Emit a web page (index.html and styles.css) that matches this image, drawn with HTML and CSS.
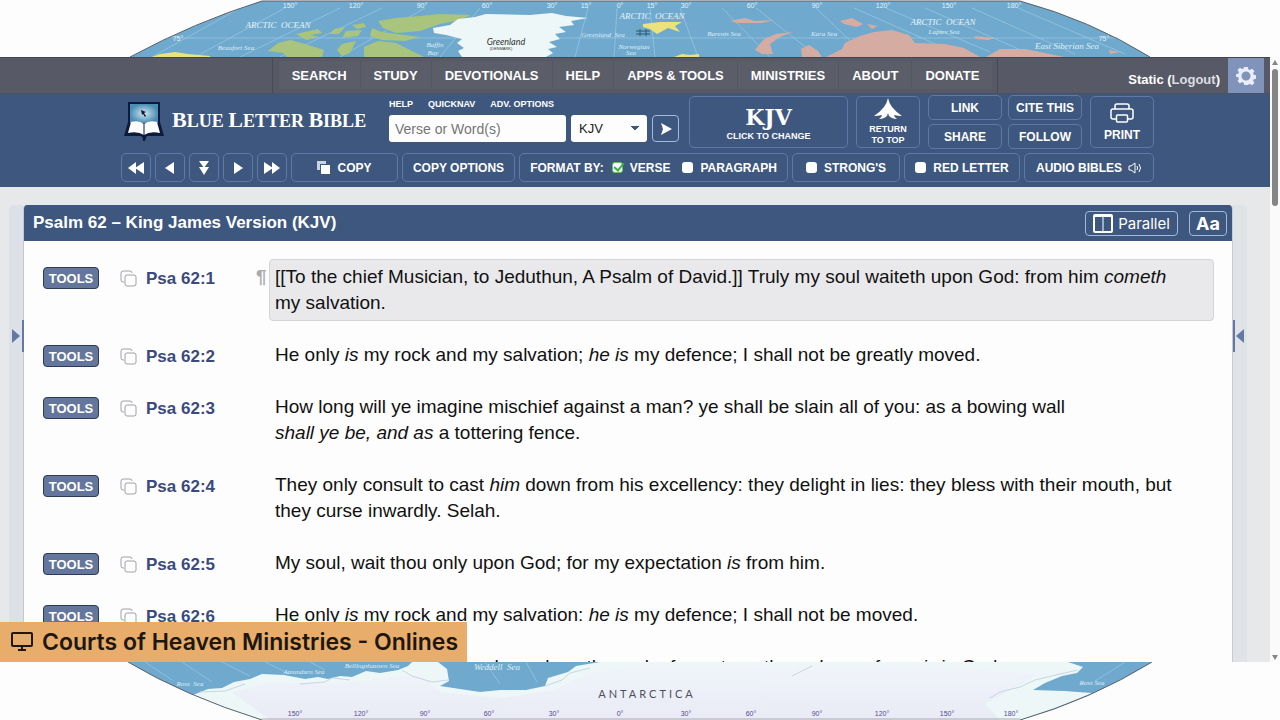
FILE: index.html
```html
<!DOCTYPE html>
<html lang="en">
<head>
    <meta charset="utf-8">
    <title>Psalm 62 - Blue Letter Bible</title>
    <link rel="stylesheet" href="styles.css">
</head>
<body>

    <svg class="map" viewBox="0 0 1280 57" preserveAspectRatio="none">
        <path class="sea" d="M130 57 Q195 22 262 1 H1020 Q1090 20 1150 57 Z"/>
        <g class="grid-lines">
            <path d="M172 38 H1118 M152 57 L240 8 M195 57 L285 8 M240 57 L340 8 M280 57 L382 8 M340 57 L425 8 M440 57 L480 8 M575 57 L588 8 M614 57 L617 8 M655 57 L650 8 M698 57 L680 8 M770 57 L722 8 M818 57 L756 8 M862 52 L816 8 M940 46 L854 8 M990 52 L886 8 M1030 54 L925 8 M1075 54 L972 8 M1125 54 L1018 8"/>
        </g>
        <path class="land-yellow" d="M152 57 L160 54 L175 52 L188 54 L210 56 V57 Z M643 24 L660 22 L682 22 L675 26 L680 32 L668 28 L657 34 L650 29 L643 27 Z M674 57 L682 54 L690 55 L699 54 V57 Z"/>
        <path class="land-green" d="M268 51 L278 43 L290 40 L305 44 L324 50 L322 57 H287 L283 53 Z M296 34 L318 29 L322 33 L310 35 L319 37 L306 40 Z M334 29 L345 27 L339 34 L330 34 Z M346 31 L362 30 L358 36 L342 38 Z M352 25 L364 23 L366 27 L357 29 Z M378 21 L396 18 L420 16 L440 14 L471 15 L460 20 L440 24 L420 31 L396 33 L383 28 Z M372 28 L382 32 L397 34 L420 37 L405 41 L382 40 L370 36 Z M342 44 L356 41 L350 53 L342 56 L337 50 Z M364 47 L378 41 L396 43 L410 50 L424 57 H364 Z"/>
        <path class="ice" d="M433 28 L450 25 L458 19 L475 17 L486 14 L530 15 L552 13 L566 16 L588 18 L571 21 L574 25 L559 27 L566 32 L555 34 L560 39 L549 42 L557 47 L548 49 L553 53 L546 57 H462 L458 51 L464 48 L457 43 L462 39 L446 35 L434 33 Z"/>
        <path class="land-pink" d="M730 21 L745 18 L755 21 L774 20 L762 23 L738 23 Z M755 50 L764 39 L776 34 L793 32 L780 37 L770 44 L773 54 L762 54 Z M801 49 L809 45 L818 51 L822 57 H802 Z M826 57 L842 49 L845 43 L860 36 L874 32 L892 30 L909 35 L915 43 L945 44 L964 48 L980 57 Z M840 21 L852 18 L863 24 L857 27 L844 24 Z M867 24 L878 26 L872 29 Z M974 36 L995 38 L988 40 L976 39 Z M986 57 L1000 49 L1025 49 L1045 53 L1064 57 Z M1109 50 L1120 52 L1110 54 Z"/>
        <path class="mark" d="M636 31 H650 M636 34 H650 M640 29 V36 M646 29 V36"/>
        <path class="map-edge" d="M130 57 Q195 22 262 1 H1020 Q1090 20 1150 57"/>
        <g class="degrees">
            <text x="290" y="8">150°</text><text x="356" y="8">120°</text><text x="422" y="8">90°</text>
            <text x="487" y="8">60°</text><text x="552" y="8">30°</text><text x="586" y="8">15°</text>
            <text x="620" y="8">0°</text><text x="652" y="8">15°</text><text x="686" y="8">30°</text>
            <text x="752" y="8">60°</text><text x="817" y="8">90°</text><text x="883" y="8">120°</text>
            <text x="949" y="8">150°</text><text x="1014" y="8">180°</text>
            <text x="178" y="41">75°</text><text x="1104" y="41">75°</text>
        </g>
        <g class="ocean">
            <text x="278" y="28">ARCTIC &nbsp;OCEAN</text><text x="652" y="19">ARCTIC &nbsp;OCEAN</text><text x="943" y="25">ARCTIC &nbsp;OCEAN</text>
        </g>
        <g class="sea-name">
            <text x="236" y="50">Beaufort Sea</text><text x="435" y="47">Baffin</text><text x="433" y="55">Bay</text>
            <text x="603" y="37">Greenland &nbsp;Sea</text><text x="634" y="49">Norwegian</text><text x="631" y="55">Sea</text>
            <text x="724" y="36">Barents Sea</text><text x="824" y="36">Kara Sea</text><text x="944" y="34">Laptev Sea</text>
            <text class="large" x="1067" y="49">East Siberian Sea</text>
        </g>
        <text class="greenland" x="506" y="45">Greenland</text>
        <text class="denmark" x="501" y="50">(DENMARK)</text>
    </svg>

    <div class="browser">
        <div class="page">
            <nav class="top-nav">
                <div class="menu">
                    <a href="#">SEARCH</a>
                    <a href="#">STUDY</a>
                    <a href="#">DEVOTIONALS</a>
                    <a href="#">HELP</a>
                    <a href="#">APPS &amp; TOOLS</a>
                    <a href="#">MINISTRIES</a>
                    <a href="#">ABOUT</a>
                    <a href="#">DONATE</a>
                </div>
                <div class="account">
                    <span class="user">Static (<a href="#">Logout</a>)</span>
                    <button class="gear" aria-label="Settings">
                        <svg width="20" height="20" viewBox="0 0 22 22">
                            <path fill="#e9eef6" fill-rule="evenodd" d="M9 1h4l.6 2.800 1.700.7 2.400-1.600 2.600 2.600-1.500 2.400.7 1.700 2.500.5v3.800l-2.500.6-.7 1.700 1.500 2.400-2.600 2.600-2.400-1.500-1.700.7L13 21H9l-.6-2.600-1.700-.7-2.400 1.500-2.600-2.600 1.500-2.400-.7-1.700L0 11.900V9.100l2.500-.6.7-1.700-1.500-2.400 2.600-2.600 2.400 1.600 1.700-.7z M11 6a5 5 0 1 0 0 10a5 5 0 0 0 0-10z"/>
                        </svg>
                    </button>
                </div>
            </nav>

            <header class="site-header">
                <div class="header-inner">
                    <div class="header-row">
                        <a class="logo" href="#">
                            <svg width="40" height="40" viewBox="0 0 40 40">
                                <defs>
                                    <radialGradient id="screen">
                                        <stop offset="0" stop-color="#d2e8ee"/>
                                        <stop offset="1" stop-color="#4b8db4"/>
                                    </radialGradient>
                                </defs>
                                <path fill="#0d1a3c" d="M4 0h32v20l4 14H23q-1 1-2 5h-2q0-4-2-5H0l4-14z"/>
                                <path fill="url(#screen)" d="M6 2h28v19H6z"/>
                                <path fill="#fff" d="M7 20q8-2 13 2q5-4 13-2l3 11q-10-2-16 2q-6-4-16-2z"/>
                                <path stroke="#0d1a3c" d="M20 22v11"/>
                                <path fill="#111b30" d="M17 8l5 2-2 1 2 3-1 1-2-3-1 1z"/>
                            </svg>
                            <span><span class="cap">B</span>LUE <span class="cap">L</span>ETTER <span class="cap">B</span>IBLE</span>
                        </a>
                        <div class="search">
                            <div class="search-links">
                                <a href="#">HELP</a>
                                <a href="#">QUICKNAV</a>
                                <a href="#">ADV. OPTIONS</a>
                            </div>
                            <form class="search-form">
                                <input type="text" placeholder="Verse or Word(s)" aria-label="Verse or Word(s)">
                                <select aria-label="Version">
                                    <option>KJV</option>
                                </select>
                                <button class="go" type="button" aria-label="Go">
                                    <svg width="12" height="12" viewBox="0 0 12 12"><path fill="#fff" d="M1 0l11 6-11 6 2-6z"/></svg>
                                </button>
                            </form>
                        </div>
                        <div class="actions">
                            <button class="btn version"><b>KJV</b><small>CLICK TO CHANGE</small></button>
                            <button class="btn square to-top">
                                <svg width="28" height="22" viewBox="0 0 28 22"><path fill="#fff" d="M14 0q1 5 4 9q4 5 10 9q-4 0-8-1q0 2 3 4q-5 0-8-3l-1-3-1 3q-3 3-8 3q3-2 3-4q-4 1-8 1q6-4 10-9q3-4 4-9z"/></svg>
                                <small>RETURN<br>TO TOP</small>
                            </button>
                            <div class="links">
                                <button class="btn">LINK</button>
                                <button class="btn">CITE THIS</button>
                                <button class="btn">SHARE</button>
                                <button class="btn">FOLLOW</button>
                            </div>
                            <button class="btn square print">
                                <svg width="24" height="20" viewBox="0 0 24 20" fill="none" stroke="#fff" stroke-width="1.500">
                                    <path d="M5 6V3q0-2 2-2h10q2 0 2 2v3M6 16H3q-2 0-2-2V8q0-2 2-2h18q2 0 2 2v6q0 2-2 2h-3"/>
                                    <rect x="6.500" y="12" width="11" height="7" rx="1"/>
                                </svg>
                                PRINT
                            </button>
                        </div>
                    </div>

                    <div class="toolbar">
                        <button class="btn" aria-label="Previous book"><svg width="16" height="12" viewBox="0 0 16 12"><path fill="#fff" d="M8 0v12L0 6zM16 0v12L7 6z"/></svg></button>
                        <button class="btn" aria-label="Previous chapter"><svg width="16" height="12" viewBox="0 0 16 12"><path fill="#fff" d="M12 0v12L3 6z"/></svg></button>
                        <button class="btn" aria-label="Jump down"><svg width="10" height="14" viewBox="0 0 10 14"><path fill="#fff" d="M0 0h10L5 7zM0 6h10L5 14z"/></svg></button>
                        <button class="btn" aria-label="Next chapter"><svg width="16" height="12" viewBox="0 0 16 12"><path fill="#fff" d="M4 0v12l9-6z"/></svg></button>
                        <button class="btn" aria-label="Next book"><svg width="16" height="12" viewBox="0 0 16 12"><path fill="#fff" d="M0 0v12l9-6zM8 0v12l8-6z"/></svg></button>
                        <button class="btn">
                            <svg width="14" height="13" viewBox="0 0 14 13"><path fill="#c6d2e6" d="M0 0h9v3H3v6H0z"/><path fill="#fff" d="M4 4h9v9H4z"/></svg>
                            COPY
                        </button>
                        <button class="btn">COPY OPTIONS</button>
                        <div class="btn format">
                            <span>FORMAT BY:</span>
                            <label><input type="checkbox" checked>VERSE</label>
                            <label><input type="checkbox">PARAGRAPH</label>
                        </div>
                        <label class="btn"><input type="checkbox">STRONG'S</label>
                        <label class="btn"><input type="checkbox">RED LETTER</label>
                        <button class="btn">AUDIO BIBLES
                            <svg width="14" height="12" viewBox="0 0 14 12" fill="none" stroke="#fff"><path d="M1 4h2l4-3v10L3 8H1zM9 4q1 2 0 4M11 2q3 4 0 8"/></svg>
                        </button>
                    </div>
                </div>
            </header>

            <div class="content">
                <aside class="gutter left"><button aria-label="Open left panel"><svg width="8" height="14" viewBox="0 0 8 14"><path fill="#6478a6" d="M0 0l8 7-8 7z"/></svg></button></aside>
                <main class="panel">
                    <div class="panel-head">
                        <h1>Psalm 62 – King James Version (KJV)</h1>
                        <button class="parallel">
                            <svg width="20" height="19" viewBox="0 0 20 19"><rect x="1" y="1" width="18" height="17" rx="1" fill="none" stroke="#fff" stroke-width="2"/><path stroke="#fff" d="M10 2v16M1 2.500h18"/></svg>
                            Parallel
                        </button>
                        <button class="text-size">Aa</button>
                    </div>
                    <div class="verses">
                        <div class="verse current">
                            <button class="tools">TOOLS</button>
                            <svg class="copy" viewBox="0 0 17 17"><path d="M4 12H3q-2 0-2-2V3q0-2 2-2h7q2 0 2 2"/><rect x="5" y="5" width="11" height="11" rx="2"/></svg>
                            <a class="ref" href="#">Psa 62:1</a>
                            <span class="mark-par">¶</span>
                            <p>[[To the chief Musician, to Jeduthun, A Psalm of David.]] Truly my soul waiteth upon God: from him <em>cometh</em> my salvation.</p>
                        </div>
                        <div class="verse">
                            <button class="tools">TOOLS</button>
                            <svg class="copy" viewBox="0 0 17 17"><path d="M4 12H3q-2 0-2-2V3q0-2 2-2h7q2 0 2 2"/><rect x="5" y="5" width="11" height="11" rx="2"/></svg>
                            <a class="ref" href="#">Psa 62:2</a>
                            <p>He only <em>is</em> my rock and my salvation; <em>he is</em> my defence; I shall not be greatly moved.</p>
                        </div>
                        <div class="verse">
                            <button class="tools">TOOLS</button>
                            <svg class="copy" viewBox="0 0 17 17"><path d="M4 12H3q-2 0-2-2V3q0-2 2-2h7q2 0 2 2"/><rect x="5" y="5" width="11" height="11" rx="2"/></svg>
                            <a class="ref" href="#">Psa 62:3</a>
                            <p>How long will ye imagine mischief against a man? ye shall be slain all of you: as a bowing wall <em>shall ye be, and as</em> a tottering fence.</p>
                        </div>
                        <div class="verse">
                            <button class="tools">TOOLS</button>
                            <svg class="copy" viewBox="0 0 17 17"><path d="M4 12H3q-2 0-2-2V3q0-2 2-2h7q2 0 2 2"/><rect x="5" y="5" width="11" height="11" rx="2"/></svg>
                            <a class="ref" href="#">Psa 62:4</a>
                            <p>They only consult to cast <em>him</em> down from his excellency: they delight in lies: they bless with their mouth, but they curse inwardly. Selah.</p>
                        </div>
                        <div class="verse">
                            <button class="tools">TOOLS</button>
                            <svg class="copy" viewBox="0 0 17 17"><path d="M4 12H3q-2 0-2-2V3q0-2 2-2h7q2 0 2 2"/><rect x="5" y="5" width="11" height="11" rx="2"/></svg>
                            <a class="ref" href="#">Psa 62:5</a>
                            <p>My soul, wait thou only upon God; for my expectation <em>is</em> from him.</p>
                        </div>
                        <div class="verse">
                            <button class="tools">TOOLS</button>
                            <svg class="copy" viewBox="0 0 17 17"><path d="M4 12H3q-2 0-2-2V3q0-2 2-2h7q2 0 2 2"/><rect x="5" y="5" width="11" height="11" rx="2"/></svg>
                            <a class="ref" href="#">Psa 62:6</a>
                            <p>He only <em>is</em> my rock and my salvation: <em>he is</em> my defence; I shall not be moved.</p>
                        </div>
                        <div class="verse">
                            <button class="tools">TOOLS</button>
                            <svg class="copy" viewBox="0 0 17 17"><path d="M4 12H3q-2 0-2-2V3q0-2 2-2h7q2 0 2 2"/><rect x="5" y="5" width="11" height="11" rx="2"/></svg>
                            <a class="ref" href="#">Psa 62:7</a>
                            <p>In God <em>is</em> my salvation and my glory: the rock of my strength, <em>and</em> my refuge, <em>is</em> in God.</p>
                        </div>
                    </div>
                </main>
                <aside class="gutter right"><button aria-label="Open right panel"><svg width="8" height="14" viewBox="0 0 8 14"><path fill="#6478a6" d="M8 0L0 7l8 7z"/></svg></button></aside>
            </div>
        </div>

        <div class="scrollbar">
            <svg width="6" height="5" viewBox="0 0 6 5"><path fill="#858585" d="M3 0l3 5H0z"/></svg>
            <div class="thumb"></div>
            <svg width="6" height="5" viewBox="0 0 6 5"><path fill="#858585" d="M3 5l3-5H0z"/></svg>
        </div>

        <div class="banner">
            <svg width="22" height="20" viewBox="0 0 22 20" fill="none" stroke="#1d170f" stroke-width="2"><rect x="1" y="1" width="20" height="13" rx="1"/><path d="M11 14v4M7 18h8"/></svg>
            Courts of Heaven Ministries - Onlines
        </div>
    </div>

    <svg class="map" viewBox="0 0 1280 58" preserveAspectRatio="none">
        <defs>
            <linearGradient id="snow" x1="0" y1="0" x2="0" y2="1">
                <stop offset="0" stop-color="#f0f5fa"/>
                <stop offset="1" stop-color="#e9eaf5"/>
            </linearGradient>
        </defs>
        <path class="sea" d="M128 0 Q185 34 262 58 H1020 Q1090 38 1152 0 Z"/>
        <path class="grid-lines" d="M145 0 L172 18 M182 0 L212 20 M222 0 L250 14 M265 0 L290 12 M310 0 L325 8 M485 0 L500 22 M526 0 L537 20 M1125 0 L1095 19"/>
        <path class="ice" d="M193 33 L208 27 L222 26 L234 20 L250 17 L262 12 L284 13 L305 17 L318 15 L328 17 L340 14 L352 15 L366 9 L380 11 L398 8 L408 4 L412 0 H438 L447 7 L449 19 L440 24 L480 30 L500 28 L526 28 L545 24 L548 16 L568 10 L576 4 L600 0 H1068 L1083 5 L1077 11 L1062 14 L1045 21 L1033 28 L1064 29 L1092 31 Q1060 45 1020 58 H262 Q226 48 193 33 Z"/>
        <path class="shade" d="M232 30 L270 20 L330 22 L420 12 L440 30 L500 36 L555 28 L590 10 L660 4 L900 2 L1040 12 L1010 28 L985 42 L1000 58 H270 Z"/>
        <path class="ridge" d="M300 22 L325 20 L332 16 L350 18 M402 8 L412 14 L432 20 L448 18 M545 24 L562 18 L570 11 L590 6 M990 36 L1000 30 L1020 25 L1035 18 L1060 12 L1078 8 M792 14 L812 4 M200 30 L225 29 L245 22"/>
        <path class="map-edge" d="M128 0 Q185 34 262 58 M1152 0 Q1090 38 1020 58"/>
        <path class="base-line" d="M262 57 H1020"/>
        <g class="degrees dark">
            <text x="295" y="54">150°</text><text x="361" y="54">120°</text><text x="425" y="54">90°</text>
            <text x="489" y="54">60°</text><text x="554" y="54">30°</text><text x="620" y="54">0°</text>
            <text x="686" y="54">30°</text><text x="751" y="54">60°</text><text x="817" y="54">90°</text>
            <text x="882" y="54">120°</text><text x="947" y="54">150°</text><text x="1011" y="54">180°</text>
        </g>
        <g class="sea-name">
            <text x="190" y="24">Ross &nbsp;Sea</text><text x="304" y="12">Amundsen Sea</text>
            <text x="372" y="6">Bellingshausen Sea</text><text class="large" x="497" y="8">Weddell &nbsp;Sea</text>
            <text x="1092" y="23">Ross Sea</text>
        </g>
        <text class="antarctica" x="647" y="36">ANTARCTICA</text>
    </svg>

</body>
</html>
```

FILE: styles.css
```css
* {
    box-sizing: border-box;
}

body {
    margin: 0;
    height: 100vh;
    display: grid;
    grid-template-rows: 57px minmax(0, 1fr) 58px;
    background-color: #fdfdfe;
    font-family: "Liberation Sans", Arial, sans-serif;
    overflow: hidden;
}

a {
    color: inherit;
    text-decoration: none;
}

button {
    font-family: inherit;
    cursor: pointer;
}

svg {
    flex-shrink: 0;
}

/* world map behind the window */
.map {
    display: block;
    width: 100%;
    height: 100%;
}

.sea {
    fill: #6faace;
}

.grid-lines {
    fill: none;
    stroke: #a5cde2;
    stroke-width: 1;
    opacity: 0.6;
}

.land-green {
    fill: #a9c47c;
}

.land-yellow {
    fill: #ece27b;
}

.land-pink {
    fill: #d5aca1;
}

.ice {
    fill: #eef7f7;
}

.shade {
    fill: url(#snow);
}

.ridge {
    fill: none;
    stroke: #c9d5e1;
}

.mark {
    stroke: #2b566b;
}

.map-edge {
    fill: none;
    stroke: #5a626a;
    stroke-width: 1;
}

.base-line {
    stroke: #aaabb3;
}

.map text {
    text-anchor: middle;
}

.degrees {
    font-size: 7px;
    fill: #e4f1f7;
}

.degrees.dark {
    fill: #55478f;
}

.ocean {
    font: italic 9px "Liberation Serif", serif;
    fill: #e4f1f7;
}

.sea-name {
    font: italic 7px "Liberation Serif", serif;
    fill: #dceef6;
}

.sea-name .large {
    font-size: 9px;
}

.greenland {
    font: italic 9px Lato, sans-serif;
    fill: #333;
}

.denmark {
    font-size: 4px;
    fill: #333;
}

.antarctica {
    font: 11px Lato, sans-serif;
    letter-spacing: 3px;
    fill: #4d4f5c;
}

/* browser window */
.browser {
    position: relative;
    display: flex;
    overflow: hidden;
}

.page {
    flex: 1;
    min-width: 0;
    display: flex;
    flex-direction: column;
    background-color: #e6e8ea;
}

.scrollbar {
    width: 10px;
    padding: 3px 0 2px;
    display: flex;
    flex-direction: column;
    align-items: center;
    background-color: #fafafa;
}

.thumb {
    width: 6px;
    height: 137px;
    margin: 4px 0 auto;
    border-radius: 3px;
    background-color: #858585;
}

.top-nav {
    display: grid;
    grid-template-columns: 1fr auto 1fr;
    height: 37px;
    flex-shrink: 0;
    background-color: #575a66;
    border-top: 1px solid #44464f;
    border-bottom: 1px solid #4b5263;
    color: #fff;
    font-size: 13px;
    font-weight: bold;
}

.menu {
    grid-column: 2;
    display: flex;
    padding: 3px 5px 4px;
    border-left: 1px solid #474a55;
    border-right: 1px solid #474a55;
}

.menu a {
    display: flex;
    align-items: center;
    padding: 0 13px;
    background-color: #5b5d69;
    border-left: 1px solid #545762;
}

.account {
    display: flex;
    justify-content: flex-end;
    padding-right: 6px;
}

.user {
    padding: 14px 8px 0 0;
}

.user a {
    color: #dcdde2;
}

.gear {
    width: 36px;
    padding: 0;
    border: none;
    background-color: #8093ba;
    display: flex;
    align-items: center;
    justify-content: center;
}

.site-header {
    height: 93px;
    flex-shrink: 0;
    background-color: #3e577f;
    color: #fff;
}

.header-inner {
    width: 1038px;
    margin: 0 auto;
    padding-left: 5px;
}

.header-row {
    display: flex;
    height: 59px;
    padding-top: 1px;
}

.logo {
    width: 268px;
    padding: 7px 0 0 3px;
    display: flex;
    gap: 8px;
    font-family: "Liberation Serif", serif;
    font-size: 18px;
    font-weight: bold;
    line-height: 36px;
    white-space: nowrap;
}

.cap {
    font-size: 22px;
}

.search {
    width: 290px;
    margin-right: 10px;
}

.search-links {
    display: flex;
    gap: 15px;
    height: 20px;
    font-size: 9px;
    font-weight: bold;
    line-height: 18px;
}

.search-form {
    display: flex;
    gap: 5px;
}

.search-form input {
    flex: 1;
    min-width: 0;
    height: 27px;
    padding: 0 6px;
    border: none;
    border-radius: 3px;
    background-color: #fdfdfe;
    font: 14px "Liberation Sans", Arial, sans-serif;
}

.search-form select {
    appearance: none;
    width: 76px;
    height: 27px;
    padding: 0 8px;
    border: none;
    border-radius: 3px;
    color: #222;
    font: 13px "Liberation Sans", Arial, sans-serif;
    background: linear-gradient(to bottom right, #3e577f 50%, transparent 50%) 64px 11px / 4px 5px no-repeat,
        linear-gradient(to bottom left, #3e577f 50%, transparent 50%) 60px 11px / 4px 5px no-repeat,
        #fdfdfe;
}

.go {
    width: 27px;
    height: 27px;
    padding: 0;
    border: 1px solid #a3b8de;
    border-radius: 4px;
    background: none;
}

.go svg {
    display: block;
    margin: auto;
}

.btn {
    display: flex;
    align-items: center;
    justify-content: center;
    padding: 0;
    border: 1px solid #5f79a6;
    border-radius: 5px;
    background: none;
    color: #fff;
    font-size: 12px;
    font-weight: bold;
    white-space: nowrap;
}

.btn small {
    font-size: 9px;
}

.actions {
    display: flex;
    gap: 8px;
    height: 54px;
}

.version {
    width: 159px;
    margin: 1px 0;
    flex-direction: column;
}

.version b {
    font-family: "DejaVu Serif", serif;
    font-size: 22px;
    line-height: 28px;
}

.square {
    width: 64px;
    margin: 1px 0;
    flex-direction: column;
}

.to-top small {
    line-height: 11px;
    padding-top: 4px;
}

.print {
    gap: 5px;
}

.links {
    display: grid;
    grid-template-columns: 74px 74px;
    grid-template-rows: 25px 25px;
    gap: 4px 6px;
}

.toolbar {
    display: grid;
    grid-template-columns: repeat(5, 30px) 107px 113px 269px 108px 116px 130px;
    gap: 4px;
}

.toolbar .btn {
    height: 29px;
    gap: 6px;
}

.toolbar .format {
    gap: 8px;
}

.format label {
    display: flex;
    align-items: center;
    gap: 7px;
    margin-right: 4px;
}

.format label:last-child {
    margin-right: 0;
}

.toolbar input {
    appearance: none;
    width: 11px;
    height: 11px;
    margin: 0;
    border-radius: 3px;
    background-color: #fdfdfe;
}

.toolbar input:checked {
    position: relative;
    border: 1px solid #5cc466;
}

.toolbar input:checked::after {
    content: "";
    position: absolute;
    left: 3px;
    top: -2px;
    width: 4px;
    height: 8px;
    border: solid #3fae4b;
    border-width: 0 2px 2px 0;
    transform: rotate(40deg);
}

.toolbar label.btn input {
    margin-right: 1px;
}

/* chapter */
.content {
    flex: 1;
    min-height: 0;
    display: flex;
    padding: 18px 23px 0 9px;
}

.gutter {
    width: 14px;
    display: flex;
    align-items: flex-start;
    background-color: #dde0e6;
    border-radius: 5px 0 0 0;
}

.gutter.right {
    background-color: #dfe3e5;
    border-radius: 0 5px 0 0;
}

.gutter button {
    position: relative;
    flex-shrink: 0;
    width: 15px;
    height: 32px;
    margin-top: 115px;
    padding: 0 0 0 3px;
    border: none;
    border-right: 2px solid #6478a6;
    background: none;
    display: flex;
    align-items: center;
}

.gutter.right button {
    padding: 0 0 0 1px;
    border-right: none;
    border-left: 2px solid #6478a6;
}

.panel {
    flex: 1;
    min-width: 0;
    background-color: #fdfdfe;
    border: 1px solid #c3c9d9;
    border-width: 0 1px;
    border-radius: 4px 4px 0 0;
    overflow: hidden;
}

.panel-head {
    display: flex;
    align-items: center;
    height: 36px;
    padding: 0 5px 0 9px;
    background-color: #3e577f;
    color: #fff;
}

.panel-head h1 {
    flex: 1;
    margin: 0;
    font-size: 17px;
}

.panel-head button {
    display: flex;
    align-items: center;
    justify-content: center;
    height: 25px;
    padding: 0;
    border: 1px solid #a3b8de;
    border-radius: 4px;
    background: none;
    color: #fff;
}

.panel-head .parallel {
    width: 93px;
    gap: 5px;
    margin-right: 11px;
    font: 15px Inter, sans-serif;
}

.panel-head .text-size {
    width: 38px;
    font: bold 18px Inter, sans-serif;
}

.verses {
    display: flex;
    flex-direction: column;
    gap: 26px;
    padding: 23px 18px 0 19px;
}

.verse {
    position: relative;
    display: grid;
    grid-template-columns: 77px 26px 129px 1fr;
    align-items: start;
}

.tools {
    width: 56px;
    height: 22px;
    margin-top: 3px;
    padding: 0;
    border: 1px solid #2d3a5a;
    border-radius: 4px;
    background-color: #64769b;
    color: #fff;
    font-size: 13px;
    font-weight: bold;
}

.copy {
    width: 17px;
    height: 17px;
    margin-top: 6px;
    fill: none;
    stroke: #a0a0a8;
}

.ref {
    color: #3b4a7c;
    font-size: 17px;
    font-weight: bold;
    line-height: 22px;
    padding-top: 4px;
}

.verse p {
    grid-column: 4;
    margin: 0;
    padding-right: 32px;
    font-size: 19px;
    line-height: 26px;
    color: #111;
}

.verse em {
    white-space: nowrap;
}

.current p {
    margin: -5px 0 -5px -6px;
    padding: 4px 32px 4px 5px;
    border: 1px solid #d3d3d8;
    border-radius: 4px;
    background-color: #e9e9ec;
}

/* paragraph sign hangs in the margin of the verse */
.mark-par {
    position: absolute;
    left: 213px;
    top: 0;
    color: #a9a9af;
    font-size: 19px;
    font-weight: bold;
    line-height: 26px;
}

.banner {
    position: absolute;
    left: 0;
    bottom: 0;
    height: 40px;
    padding: 0 9px 0 11px;
    display: flex;
    align-items: center;
    gap: 9px;
    background-color: #e8ac6b;
    color: #1d170f;
    font: 600 23px Inter, sans-serif;
}
```
